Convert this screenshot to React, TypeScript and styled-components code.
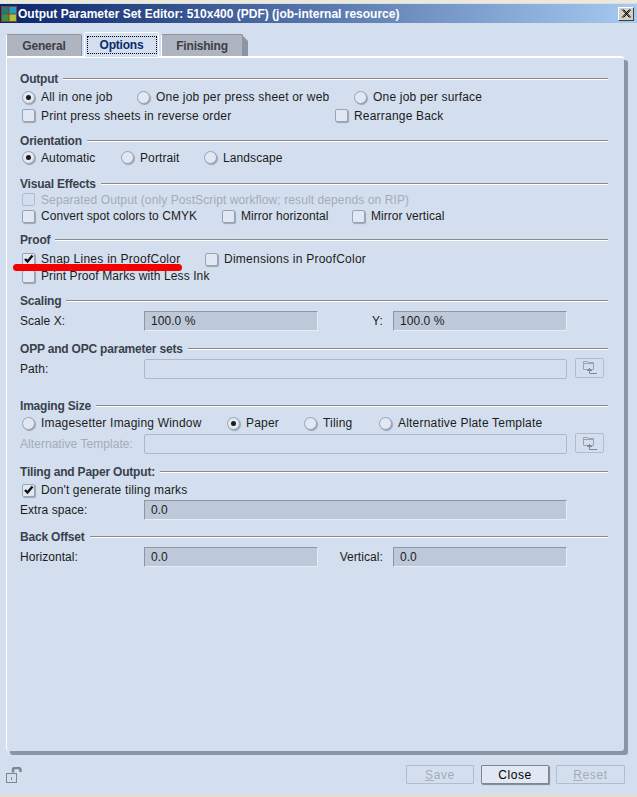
import styled, { createGlobalStyle } from "styled-components";

const GlobalStyle = createGlobalStyle`
  html, body { margin: 0; padding: 0; background: #d3dfee; }
  body { font-family: "Liberation Sans", Arial, sans-serif; font-size: 12px; color: #1c1c1c; }
`;

const Window = styled.div`
  position: relative;
  width: 637px;
  height: 797px;
  box-sizing: border-box;
  display: flex;
  flex-direction: column;
  overflow: hidden;
  background: #d3dfee;
  border-top: 3px solid #ece9d8;
  border-bottom: 2px solid #e6dccb;
`;

const TitleBar = styled.div`
  height: 19px;
  margin-top: 1px;
  flex: none;
  display: flex;
  align-items: center;
  padding: 0 3px 0 1px;
  background: linear-gradient(90deg, #0a246a 0%, #a6caf0 100%);
  color: #fff;
  font-family: "Liberation Sans", sans-serif;
  font-weight: 700;
  font-size: 12px;
`;

const TitleText = styled.span`
  flex: 1;
  margin-left: 1px;
  white-space: nowrap;
`;

const CloseBox = styled.div`
  width: 16px;
  height: 14px;
  box-sizing: border-box;
  display: flex;
  align-items: center;
  justify-content: center;
  background: #d4d0c8;
  border: 1px solid;
  border-color: #fff #404040 #404040 #fff;
`;

const TabStrip = styled.div`
  height: 33px;
  flex: none;
  display: flex;
  align-items: flex-end;
  padding-left: 6px;
  gap: 2px;
`;

const Tab = styled.div<{ $active?: boolean; $w: number }>`
  width: ${(p) => p.$w}px;
  height: ${(p) => (p.$active ? 25 : 22)}px;
  box-sizing: border-box;
  display: flex;
  align-items: center;
  justify-content: center;
  background: ${(p) => (p.$active ? "#d3dfee" : "#aeb4c0")};
  border-top: 1px solid ${(p) => (p.$active ? "#fff" : "#8d939e")};
  border-left: 1px solid #fff;
  border-right: 1px solid ${(p) => (p.$active ? "#fff" : "#8d939e")};
  border-radius: 2px 2px 0 0;
  color: ${(p) => (p.$active ? "#0a2c6a" : "#3c4048")};
  font-weight: 700;
  font-size: 12px;
  letter-spacing: -0.2px;
  margin-bottom: ${(p) => (p.$active ? "-1px" : "0")};
  position: relative;
  z-index: ${(p) => (p.$active ? 2 : 0)};
`;

const TabShade = styled.div`
  width: 5px;
  height: 20px;
  margin-left: -2px;
  background: #8b95a3;
  clip-path: polygon(0 0, 100% 5px, 100% 100%, 0 100%);
`;

const FocusBox = styled.div`
  width: 70px;
  height: 18px;
  display: flex;
  align-items: center;
  justify-content: center;
  border: 1px dotted #000;
  box-sizing: border-box;
`;

const Panel = styled.div`
  height: 695px;
  width: 618px;
  margin-left: 6px;
  flex: none;
  box-sizing: border-box;
  padding: 14px 16px 0 13px;
  border-top: 2px solid #fff;
  border-left: 1px solid #fff;
  box-shadow: 4px 4px 0 #8b95a3;
  border-radius: 0 3px 3px 3px;
`;

const Section = styled.section<{ $top: number }>`
  margin-top: ${(p) => p.$top}px;
`;

const Header = styled.div`
  height: 14px;
  display: flex;
  align-items: center;
  gap: 5px;
  color: #3a414c;
  font-weight: 700;
  font-size: 12px;
  letter-spacing: -0.2px;
  &::after {
    content: "";
    flex: 1;
    height: 1px;
    background: #8a8a8a;
    border-bottom: 1px solid #fff;
  }
`;

const Row = styled.div<{ $h: number; $sp?: number }>`
  height: ${(p) => p.$h}px;
  display: flex;
  align-items: center;
  padding-left: 2px;
  white-space: nowrap;
  letter-spacing: ${(p) => p.$sp ?? 0.2}px;
`;

const FieldRow = styled(Row)`
  padding-left: 0;
  letter-spacing: 0.05px;
`;

const Option = styled.label<{ $w?: number; $off?: boolean }>`
  width: ${(p) => (p.$w ? `${p.$w}px` : "auto")};
  flex: none;
  display: flex;
  align-items: center;
  gap: 6px;
  color: ${(p) => (p.$off ? "#a3acb8" : "#1c1c1c")};
`;

const Radio = styled.span<{ $on?: boolean }>`
  width: 13px;
  height: 13px;
  flex: none;
  box-sizing: border-box;
  border-radius: 50%;
  background: #e1e7f3;
  border: 1px solid #9aa3b2;
  box-shadow: 1px 1px 1px #9aa3b2;
  display: flex;
  align-items: center;
  justify-content: center;
  &::after {
    content: "";
    width: 5px;
    height: 5px;
    border-radius: 50%;
    background: ${(p) => (p.$on ? "#1c1c1c" : "transparent")};
  }
`;

const Check = styled.span<{ $off?: boolean }>`
  width: 13px;
  height: 13px;
  flex: none;
  box-sizing: border-box;
  border-radius: 2px;
  background: ${(p) => (p.$off ? "#d3dfee" : "#e1e7f3")};
  border: 1px solid ${(p) => (p.$off ? "#b2bccb" : "#9aa3b2")};
  box-shadow: ${(p) => (p.$off ? "none" : "1px 1px 1px #9aa3b2")};
  display: flex;
  align-items: center;
  justify-content: center;
`;

const FieldLabel = styled.span<{ $w: number; $off?: boolean; $right?: boolean }>`
  width: ${(p) => p.$w}px;
  flex: none;
  text-align: ${(p) => (p.$right ? "right" : "left")};
  color: ${(p) => (p.$off ? "#a3acb8" : "#1c1c1c")};
`;

const Field = styled.div<{ $w: number; $off?: boolean }>`
  width: ${(p) => p.$w}px;
  height: 20px;
  flex: none;
  box-sizing: border-box;
  padding-left: 6px;
  display: flex;
  align-items: center;
  background: ${(p) => (p.$off ? "transparent" : "#bdc9d9")};
  border: 1px solid #a8b2c0;
  border-top-color: #8c96a4;
  border-left-color: #8c96a4;
  border-right-color: #e6edf6;
  border-bottom-color: #e6edf6;
  ${(p) => p.$off && "border-color: #aeb8c6; border-radius: 2px;"}
`;

const BrowseButton = styled.div`
  width: 29px;
  height: 20px;
  margin: 0 0 2px 8px;
  flex: none;
  box-sizing: border-box;
  border: 1px solid #b2bccb;
  border-radius: 2px;
  display: flex;
  align-items: center;
  justify-content: center;
`;

const Footer = styled.div`
  flex: 1;
  display: flex;
  align-items: flex-start;
  padding: 14px 12px 0 6px;
`;

const LockSlot = styled.div`
  flex: 1;
  padding-top: 2px;
`;

const FootButton = styled.div<{ $primary?: boolean; $w?: number }>`
  width: ${(p) => p.$w ?? 68}px;
  height: 19px;
  margin-left: 7px;
  box-sizing: border-box;
  display: flex;
  align-items: center;
  justify-content: center;
  letter-spacing: 0.6px;
  border-radius: 1px;
  color: ${(p) => (p.$primary ? "#000" : "#a3acb8")};
  background: ${(p) => (p.$primary ? "#e1e7f3" : "transparent")};
  border: 1px solid ${(p) => (p.$primary ? "#7d8694" : "#b2bccb")};
  box-shadow: ${(p) => (p.$primary ? "1px 1px 1px #7d8694" : "none")};
`;

const Mnemonic = styled.span`
  text-decoration: underline;
`;

const RedMark = styled.div`
  position: absolute;
  left: 13px;
  top: 261px;
  width: 169px;
  height: 7px;
  border-radius: 4px;
  background: #f40000;
`;

const Tick = () => (
  <svg width="11" height="11" viewBox="0 0 11 11">
    <path d="M2 5 L4.5 7.5 L9.5 1.5" fill="none" stroke="#111" strokeWidth="2.4" />
  </svg>
);

const AppIcon = () => (
  <svg width="16" height="16" viewBox="0 0 16 16">
    <rect width="16" height="16" fill="#8c3a3a" />
    <rect x="1" y="1" width="6.5" height="6.5" fill="#1f7f6e" />
    <rect x="8.5" y="1" width="6.5" height="6.5" fill="#1e9fc4" />
    <rect x="1" y="8.5" width="6.5" height="6.5" fill="#2f9a45" />
    <rect x="8.5" y="8.5" width="6.5" height="6.5" fill="#a6c832" />
  </svg>
);

const CloseIcon = () => (
  <svg width="10" height="9" viewBox="0 0 10 9">
    <path d="M1 0.5 L8.5 8.5 M2.5 0.5 L10 8.5 M8.5 0.5 L1 8.5 M10 0.5 L2.5 8.5" stroke="#000" strokeWidth="1" />
  </svg>
);

const BrowseIcon = () => (
  <svg width="16" height="15" viewBox="0 0 16 15" fill="none" stroke="#9aa3b0" strokeWidth="1">
    <path d="M1.5 3.5 V1.5 H5.5 L6.5 2.5 H11.5 V9.5 H1.5 Z" />
    <path d="M1.5 3.5 H11.5" />
    <path d="M7.5 8 V13.5 H15" stroke="#7f8895" />
    <path d="M5 10.5 H10 M6 9.5 H9" stroke="#7f8895" />
  </svg>
);

const LockIcon = () => (
  <svg width="16" height="16" viewBox="0 0 16 16" fill="none">
    <path d="M7 5.5 V2.5 Q7 1 9 1 H12 Q14.5 1 14.5 3 V5" stroke="#7d8792" strokeWidth="2.5" />
    <rect x="0.5" y="6.5" width="10" height="9" stroke="#7d8792" />
    <path d="M5.5 10 V13" stroke="#7d8792" />
  </svg>
);

type ChoiceProps = { label: string; w?: number; on?: boolean };

const RadioOption = ({ label, w, on }: ChoiceProps) => (
  <Option $w={w}>
    <Radio $on={on} />
    {label}
  </Option>
);

const CheckOption = ({ label, w, on, off }: ChoiceProps & { off?: boolean }) => (
  <Option $w={w} $off={off}>
    <Check $off={off}>{on && <Tick />}</Check>
    {label}
  </Option>
);

export default function App() {
  return (
    <>
      <GlobalStyle />
      <Window>
        <TitleBar>
          <AppIcon />
          <TitleText>Output Parameter Set Editor: 510x400 (PDF) (job-internal resource)</TitleText>
          <CloseBox>
            <CloseIcon />
          </CloseBox>
        </TitleBar>

        <TabStrip>
          <Tab $w={76}>General</Tab>
          <Tab $w={75} $active>
            <FocusBox>Options</FocusBox>
          </Tab>
          <Tab $w={82}>Finishing</Tab>
          <TabShade />
        </TabStrip>

        <Panel>
          <Section $top={0}>
            <Header>Output</Header>
            <Row $h={22}>
              <RadioOption label="All in one job" w={115} on />
              <RadioOption label="One job per press sheet or web" w={217} />
              <RadioOption label="One job per surface" />
            </Row>
            <Row $h={15}>
              <CheckOption label="Print press sheets in reverse order" w={313} />
              <CheckOption label="Rearrange Back" />
            </Row>
          </Section>

          <Section $top={11}>
            <Header>Orientation</Header>
            <Row $h={19} $sp={0.1}>
              <RadioOption label="Automatic" w={99} on />
              <RadioOption label="Portrait" w={83} />
              <RadioOption label="Landscape" />
            </Row>
          </Section>

          <Section $top={10}>
            <Header>Visual Effects</Header>
            <Row $h={17} $sp={0.1}>
              <CheckOption label="Separated Output (only PostScript workflow; result depends on RIP)" off />
            </Row>
            <Row $h={16} $sp={0.05}>
              <CheckOption label="Convert spot colors to CMYK" w={200} />
              <CheckOption label="Mirror horizontal" w={130} />
              <CheckOption label="Mirror vertical" />
            </Row>
          </Section>

          <Section $top={9}>
            <Header>Proof</Header>
            <Row $h={24} $sp={0.25}>
              <CheckOption label="Snap Lines in ProofColor" w={183} on />
              <CheckOption label="Dimensions in ProofColor" />
            </Row>
            <Row $h={10} $sp={0.1}>
              <CheckOption label="Print Proof Marks with Less Ink" />
            </Row>
          </Section>

          <Section $top={13}>
            <Header>Scaling</Header>
            <FieldRow $h={26}>
              <FieldLabel $w={124}>Scale X:</FieldLabel>
              <Field $w={174}>100.0 %</Field>
              <FieldLabel $w={75} $right>Y:&nbsp;&nbsp;&nbsp;</FieldLabel>
              <Field $w={174}>100.0 %</Field>
            </FieldRow>
          </Section>

          <Section $top={8}>
            <Header>OPP and OPC parameter sets</Header>
            <FieldRow $h={25}>
              <FieldLabel $w={124}>Path:</FieldLabel>
              <Field $w={423} $off />
              <BrowseButton>
                <BrowseIcon />
              </BrowseButton>
            </FieldRow>
          </Section>

          <Section $top={18}>
            <Header>Imaging Size</Header>
            <Row $h={20}>
              <RadioOption label="Imagesetter Imaging Window" w={205} />
              <RadioOption label="Paper" w={77} on />
              <RadioOption label="Tiling" w={75} />
              <RadioOption label="Alternative Plate Template" />
            </Row>
            <FieldRow $h={22}>
              <FieldLabel $w={124} $off>Alternative Template:</FieldLabel>
              <Field $w={423} $off />
              <BrowseButton>
                <BrowseIcon />
              </BrowseButton>
            </FieldRow>
          </Section>

          <Section $top={10}>
            <Header>Tiling and Paper Output:</Header>
            <Row $h={22} $sp={0.15}>
              <CheckOption label="Don't generate tiling marks" on />
            </Row>
            <FieldRow $h={18}>
              <FieldLabel $w={124}>Extra space:</FieldLabel>
              <Field $w={423}>0.0</Field>
            </FieldRow>
          </Section>

          <Section $top={11}>
            <Header>Back Offset</Header>
            <FieldRow $h={26}>
              <FieldLabel $w={124}>Horizontal:</FieldLabel>
              <Field $w={174}>0.0</Field>
              <FieldLabel $w={75} $right>Vertical:&nbsp;&nbsp;&nbsp;</FieldLabel>
              <Field $w={174}>0.0</Field>
            </FieldRow>
          </Section>
        </Panel>

        <Footer>
          <LockSlot>
            <LockIcon />
          </LockSlot>
          <FootButton>
            <span><Mnemonic>S</Mnemonic>ave</span>
          </FootButton>
          <FootButton $primary>Close</FootButton>
          <FootButton $w={69}>
            <span><Mnemonic>R</Mnemonic>eset</span>
          </FootButton>
        </Footer>

        <RedMark />
      </Window>
    </>
  );
}
